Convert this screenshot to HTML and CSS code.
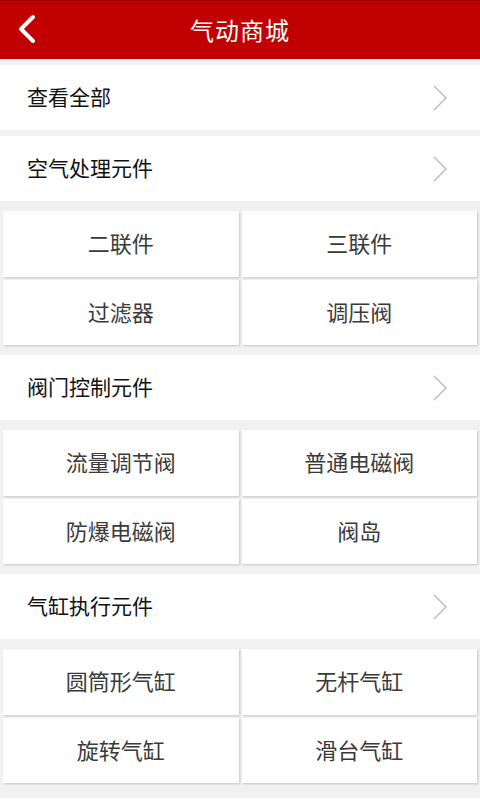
FILE: index.html
```html
<!DOCTYPE html>
<html lang="zh-CN">
<head>
    <meta charset="UTF-8">
    <meta name="viewport" content="width=device-width, initial-scale=1.0">
    <title>气动商城</title>
    <link rel="stylesheet" href="styles.css">
</head>
<body>
    <div class="topo">
        <svg class="topo_voltar" width="24" height="32" viewBox="0 0 24 32">
            <path d="M19 4 L7 16 L19 28" fill="none" stroke="#fff" stroke-width="4" stroke-linecap="round" stroke-linejoin="round"/>
        </svg>
        <h1>气动商城</h1>
    </div>

    <div class="lista">
        <div class="linha linha-sozinha">
            <span>查看全部</span>
            <svg class="seta" width="16" height="28" viewBox="0 0 16 28"><path d="M2 2 L14 14 L2 26" fill="none" stroke="#b9b9b9" stroke-width="1.4"/></svg>
        </div>

        <div class="linha">
            <span>空气处理元件</span>
            <svg class="seta" width="16" height="28" viewBox="0 0 16 28"><path d="M2 2 L14 14 L2 26" fill="none" stroke="#b9b9b9" stroke-width="1.4"/></svg>
        </div>
        <div class="grade">
            <div class="grade_item">二联件</div>
            <div class="grade_item">三联件</div>
            <div class="grade_item">过滤器</div>
            <div class="grade_item">调压阀</div>
        </div>

        <div class="linha">
            <span>阀门控制元件</span>
            <svg class="seta" width="16" height="28" viewBox="0 0 16 28"><path d="M2 2 L14 14 L2 26" fill="none" stroke="#b9b9b9" stroke-width="1.4"/></svg>
        </div>
        <div class="grade">
            <div class="grade_item">流量调节阀</div>
            <div class="grade_item">普通电磁阀</div>
            <div class="grade_item">防爆电磁阀</div>
            <div class="grade_item">阀岛</div>
        </div>

        <div class="linha">
            <span>气缸执行元件</span>
            <svg class="seta" width="16" height="28" viewBox="0 0 16 28"><path d="M2 2 L14 14 L2 26" fill="none" stroke="#b9b9b9" stroke-width="1.4"/></svg>
        </div>
        <div class="grade">
            <div class="grade_item">圆筒形气缸</div>
            <div class="grade_item">无杆气缸</div>
            <div class="grade_item">旋转气缸</div>
            <div class="grade_item">滑台气缸</div>
        </div>

        <div class="linha linha-vazia"></div>
    </div>
</body>
</html>
```

FILE: styles.css
```css
*{border: 0;margin: 0;padding: 0;box-sizing: border-box;}
body{
    height: 100vh;
    width: 100vw;
    overflow: hidden;
    background-color: #f1f1f1;
    font-family: 'Noto Sans CJK SC', 'Noto Sans', sans-serif;
}
.topo{
    display: flex;
    align-items: center;
    justify-content: center;
    height: 59px;
    background-color: #c10000;
    border-top: 1px solid #9e0000;
    position: relative;
}
.topo_voltar{
    position: absolute;
    left: 14px;
    top: 12px;
}
h1{
    color: #fff;
    font-size: 24px;
    font-weight: normal;
    letter-spacing: 1px;
    padding-bottom: 2px;
}
.lista{
    padding-top: 6px;
}
.linha{
    display: flex;
    align-items: center;
    justify-content: space-between;
    height: 65px;
    background-color: #fff;
    padding: 0 32px 4px 27px;
    margin-bottom: 10px;
    font-size: 21px;
    color: #111;
}
.linha-sozinha{
    margin-bottom: 6px;
}
.linha-vazia{
    margin-top: 15px;
}
.seta{
    margin-top: 4px;
}
.grade{
    display: grid;
    grid-template-columns: 1fr 1fr;
    gap: 3px;
    padding: 0 3px;
    margin-bottom: 10px;
}
.grade_item{
    display: flex;
    align-items: center;
    justify-content: center;
    height: 65.5px;
    background-color: #fff;
    box-shadow: 1px 1px 2px rgba(0, 0, 0, 0.18);
    font-size: 22px;
    color: #3a3a3a;
    padding-bottom: 3px;
}
```
